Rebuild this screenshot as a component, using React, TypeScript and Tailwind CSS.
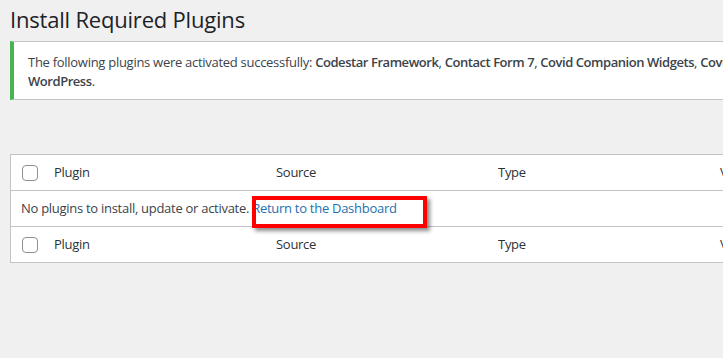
import React from 'react';

const font = { fontFamily: '"Open Sans", "Noto Sans", sans-serif' };

const Checkbox = () => (
  <span className="block w-4 h-4 rounded-[4px] border border-[#8c8f94] bg-white" />
);

const HeadRow = ({ top }: { top?: boolean }) => (
  <div className={`flex h-[36px] items-center text-[#2c3338] ${top ? 'border-b pt-[1px]' : 'border-t'} border-[#c3c4c7]`}>
    <div className="w-[33px] pl-[11px]">
      <Checkbox />
    </div>
    <div className="w-[222px] pl-[10px]">Plugin</div>
    <div className="w-[222px] pl-[10px]">Source</div>
    <div className="w-[222px] pl-[10px]">Type</div>
    <div className="w-[222px] pl-[10px]">Version</div>
  </div>
);

export default function App() {
  return (
    <div className="w-[723px] h-[358px] overflow-hidden bg-[#f0f0f1]" style={font}>
      <div className="w-[1000px] pl-[10px] text-[13px] tracking-[-0.28px] text-[#3c434a]">
        <h1 className="pt-[4px] text-[22px] leading-[30px] tracking-[-0.2px] text-[#1d2327]">Install Required Plugins</h1>

        <div className="mt-[7px] bg-white border border-[#c3c4c7] border-l-4 border-l-[#46b450] pl-[14px] pt-[11px] pb-[8px] leading-[19px] whitespace-nowrap">
          The following plugins were activated successfully: <b className="font-semibold tracking-[-0.45px]">Codestar Framework</b>,{' '}
          <b className="font-semibold tracking-[-0.45px]">Contact Form 7</b>, <b className="font-semibold tracking-[-0.45px]">Covid Companion Widgets</b>,{' '}
          <b className="font-semibold tracking-[-0.45px]">Covid Companion Charts</b>, <b className="font-semibold tracking-[-0.45px]">Elementor</b>
          <br />
          <b className="font-semibold tracking-[-0.45px]">WordPress</b>.
        </div>

        <div className="mt-[54px] bg-white border border-[#c3c4c7]">
          <HeadRow top />
          <div className="relative h-[35px] flex items-center pl-[10px]">
            <span>
              No plugins to install, update or activate.{' '}
              <a className="text-[#2271b1]">Return to the Dashboard</a>
            </span>
            <div className="absolute left-[241px] top-[5px] w-[175px] h-[32px] border-4 border-[#ff0000] shadow-[3px_3px_4px_rgba(0,0,0,0.45)]" />
          </div>
          <HeadRow />
        </div>
      </div>
    </div>
  );
}
